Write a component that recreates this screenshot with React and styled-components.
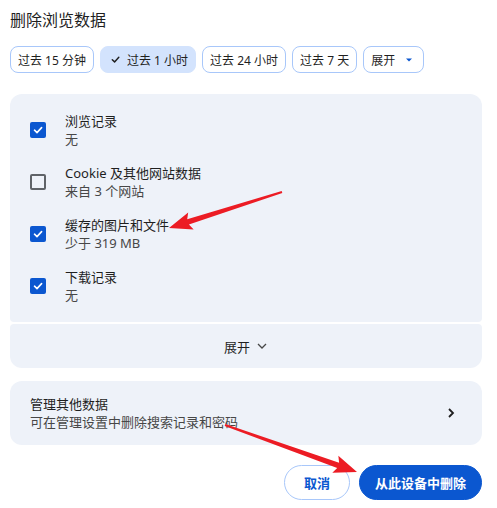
import React from 'react';
import styled, {createGlobalStyle} from 'styled-components';

const GlobalStyle = createGlobalStyle`
body {
  margin: 0;
  background: #fff;
  font-family: "Noto Sans", "Noto Sans CJK SC", sans-serif;
  color: #1f1f1f;
}
`

const Page = styled.div`
position: relative;
width: 497px;
height: 508px;
padding: 10px 15px 0 10px;
box-sizing: border-box;
`

const Title = styled.h2`
margin: 0;
font-size: 16px;
line-height: 20px;
font-weight: 400;
color: #1f1f1f;
`

const Chips = styled.div`
display: flex;
gap: 6px;
margin-top: 16px;
`

const Chip = styled.button`
display: flex;
align-items: center;
gap: ${p => p.$gap || '7px'};
height: 27px;
padding: 0 7px 0 ${p => p.$active ? '9px' : '7px'};
box-sizing: border-box;
border: 1px solid ${p => p.$active ? '#d3e3fd' : '#a8c7fa'};
background: ${p => p.$active ? '#d3e3fd' : '#fff'};
border-radius: 8px;
font-family: inherit;
font-size: 12px;
color: #1f1f1f;
white-space: nowrap;
`

const Panel = styled.div`
background: #eef2f9;
border-radius: ${p => p.$radius || '12px'};
margin-top: ${p => p.$gap || '0'};
`

const List = styled(Panel)`
display: flex;
flex-direction: column;
padding: 10px 0;
height: 228px;
box-sizing: border-box;
`

const Row = styled.div`
display: flex;
align-items: center;
gap: 19px;
height: 52px;
padding-left: 20px;
`

const Box = styled.span`
width: 16px;
height: 16px;
box-sizing: border-box;
border-radius: 2px;
display: flex;
align-items: center;
justify-content: center;
background: ${p => p.$checked ? '#0b57d0' : 'transparent'};
border: ${p => p.$checked ? 'none' : '2px solid #5f6368'};
`

const Label = styled.div`
display: flex;
flex-direction: column;
font-size: 13px;
line-height: 18px;
`

const Sub = styled.span`
color: #474747;
`

const Expand = styled(Panel)`
height: 44px;
display: flex;
align-items: center;
justify-content: center;
gap: 6px;
font-size: 13px;
`

const Manage = styled(Panel)`
height: 64px;
display: flex;
align-items: center;
justify-content: space-between;
padding: 0 26px 0 20px;
box-sizing: border-box;
font-size: 13px;
line-height: 19px;
`

const Actions = styled.div`
display: flex;
justify-content: flex-end;
gap: 9px;
margin-top: 20px;
`

const Button = styled.button`
height: 35px;
width: ${p => p.$primary ? '123px' : '66px'};
padding: 0;
border-radius: 18px;
font-family: inherit;
font-size: 13px;
font-weight: 600;
border: 1px solid ${p => p.$primary ? '#0b57d0' : '#a8c7fa'};
background: ${p => p.$primary ? '#0b57d0' : '#fff'};
color: ${p => p.$primary ? '#fff' : '#0b57d0'};
`

const Overlay = styled.svg`
position: absolute;
left: 0;
top: 0;
pointer-events: none;
`

function Check({color = '#fff', size = 12}) {
  return (
    <svg width={size} height={size} viewBox="0 0 12 12">
      <path d="M2.5 6.2 L5 8.6 L9.6 3.6" fill="none" stroke={color} strokeWidth="1.6" strokeLinecap="round" strokeLinejoin="round" />
    </svg>
  )
}

function Arrow({from, to}) {
  const dx = to[0] - from[0], dy = to[1] - from[1];
  const len = Math.hypot(dx, dy);
  const ux = dx / len, uy = dy / len, nx = -uy, ny = ux;
  const head = 20;
  const bx = to[0] - ux * head, by = to[1] - uy * head;
  const pt = (x, y, w) => `${x + nx * w},${y + ny * w}`;
  const pts = [
    pt(from[0], from[1], 1), pt(bx, by, 2.8), pt(bx - ux * 3, by - uy * 3, 9), `${to[0]},${to[1]}`,
    pt(bx - ux * 3, by - uy * 3, -9), pt(bx, by, -2.8), pt(from[0], from[1], -1)
  ].join(' ');
  return <polygon points={pts} fill="#ec1c24" />
}

const items = [
  {title: '浏览记录', sub: '无', checked: true},
  {title: 'Cookie 及其他网站数据', sub: '来自 3 个网站', checked: false},
  {title: '缓存的图片和文件', sub: '少于 319 MB', checked: true},
  {title: '下载记录', sub: '无', checked: true},
]

function App() {
  return (
    <Page>
      <GlobalStyle />
      <Title>删除浏览数据</Title>
      <Chips>
        <Chip>过去 15 分钟</Chip>
        <Chip $active $gap="6px"><Check color="#1f1f1f" size={11} />过去 1 小时</Chip>
        <Chip>过去 24 小时</Chip>
        <Chip>过去 7 天</Chip>
        <Chip>展开
          <svg width="14" height="10" viewBox="0 0 14 10"><path d="M4 3.5 L10 3.5 L7 6.5 Z" fill="#0b57d0" /></svg>
        </Chip>
      </Chips>
      <List $gap="21px" $radius="12px 12px 4px 4px">
        {items.map(it => (
          <Row key={it.title}>
            <Box $checked={it.checked}>{it.checked && <Check />}</Box>
            <Label>
              <span>{it.title}</span>
              <Sub>{it.sub}</Sub>
            </Label>
          </Row>
        ))}
      </List>
      <Expand $gap="2px" $radius="4px 4px 12px 12px">
        展开
        <svg width="12" height="12" viewBox="0 0 12 12"><path d="M2 4 L6 8 L10 4" fill="none" stroke="#474747" strokeWidth="1.3" /></svg>
      </Expand>
      <Manage $gap="13px">
        <Label>
          <span>管理其他数据</span>
          <Sub>可在管理设置中删除搜索记录和密码</Sub>
        </Label>
        <svg width="10" height="12" viewBox="0 0 10 12"><path d="M3 2 L7 6 L3 10" fill="none" stroke="#1f1f1f" strokeWidth="1.8" /></svg>
      </Manage>
      <Actions>
        <Button>取消</Button>
        <Button $primary>从此设备中删除</Button>
      </Actions>
      <Overlay width="497" height="508">
        <Arrow from={[282, 192]} to={[169, 228]} />
        <Arrow from={[225, 425]} to={[357, 472]} />
      </Overlay>
    </Page>
  )
}

export default App;
